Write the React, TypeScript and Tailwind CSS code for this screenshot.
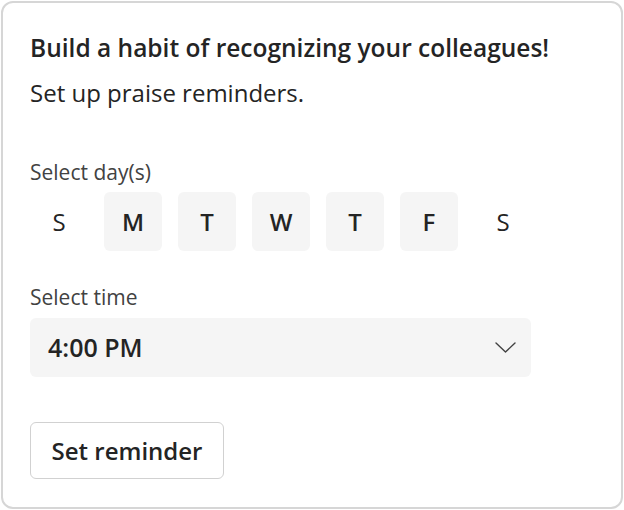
import React from 'react';

const days = [
  { label: 'S', selected: false },
  { label: 'M', selected: true },
  { label: 'T', selected: true },
  { label: 'W', selected: true },
  { label: 'T', selected: true },
  { label: 'F', selected: true },
  { label: 'S', selected: false },
];

export default function App() {
  return (
    <div className="w-[624px] h-[510px] bg-white p-px" style={{ fontFamily: '"Open Sans", "Noto Sans", sans-serif' }}>
      <div className="h-[508px] w-[622px] rounded-[12px] border-2 border-[#d6d6d6] pl-[27px] pt-[31px] text-[#242424]">
        <h1 className="text-[24.5px] leading-[28px] font-semibold">Build a habit of recognizing your colleagues!</h1>
        <p className="mt-[17px] text-[24px] leading-[28px]">Set up praise reminders.</p>

        <div className="mt-[51px] text-[21px] leading-[28px] text-[#424242]">Select day(s)</div>
        <div className="mt-[6px] flex gap-4">
          {days.map((d, i) => (
            <div
              key={i}
              className={`flex h-[59px] w-[58px] items-center justify-center rounded-[6px] text-[24px] ${
                d.selected ? 'bg-[#f5f5f5] font-semibold' : 'font-normal'
              }`}
            >
              {d.label}
            </div>
          ))}
        </div>

        <div className="mt-[32px] text-[21px] leading-[28px] text-[#424242]">Select time</div>
        <div className="mt-[7px] flex h-[59px] w-[501px] items-center justify-between rounded-[6px] bg-[#f5f5f5] pl-[18px] pr-[15px]">
          <span className="text-[25px] font-semibold">4:00 PM</span>
          <svg width="21" height="11" viewBox="0 0 21 11" fill="none">
            <path d="M1 1l9.5 9 9.5-9" stroke="#424242" strokeWidth="1.4" strokeLinecap="round" strokeLinejoin="round" />
          </svg>
        </div>

        <button className="mt-[45px] flex h-[57px] w-[194px] items-center justify-center rounded-[6px] border border-[#d1d1d1] bg-white text-[24px] font-semibold">
          Set reminder
        </button>
      </div>
    </div>
  );
}
